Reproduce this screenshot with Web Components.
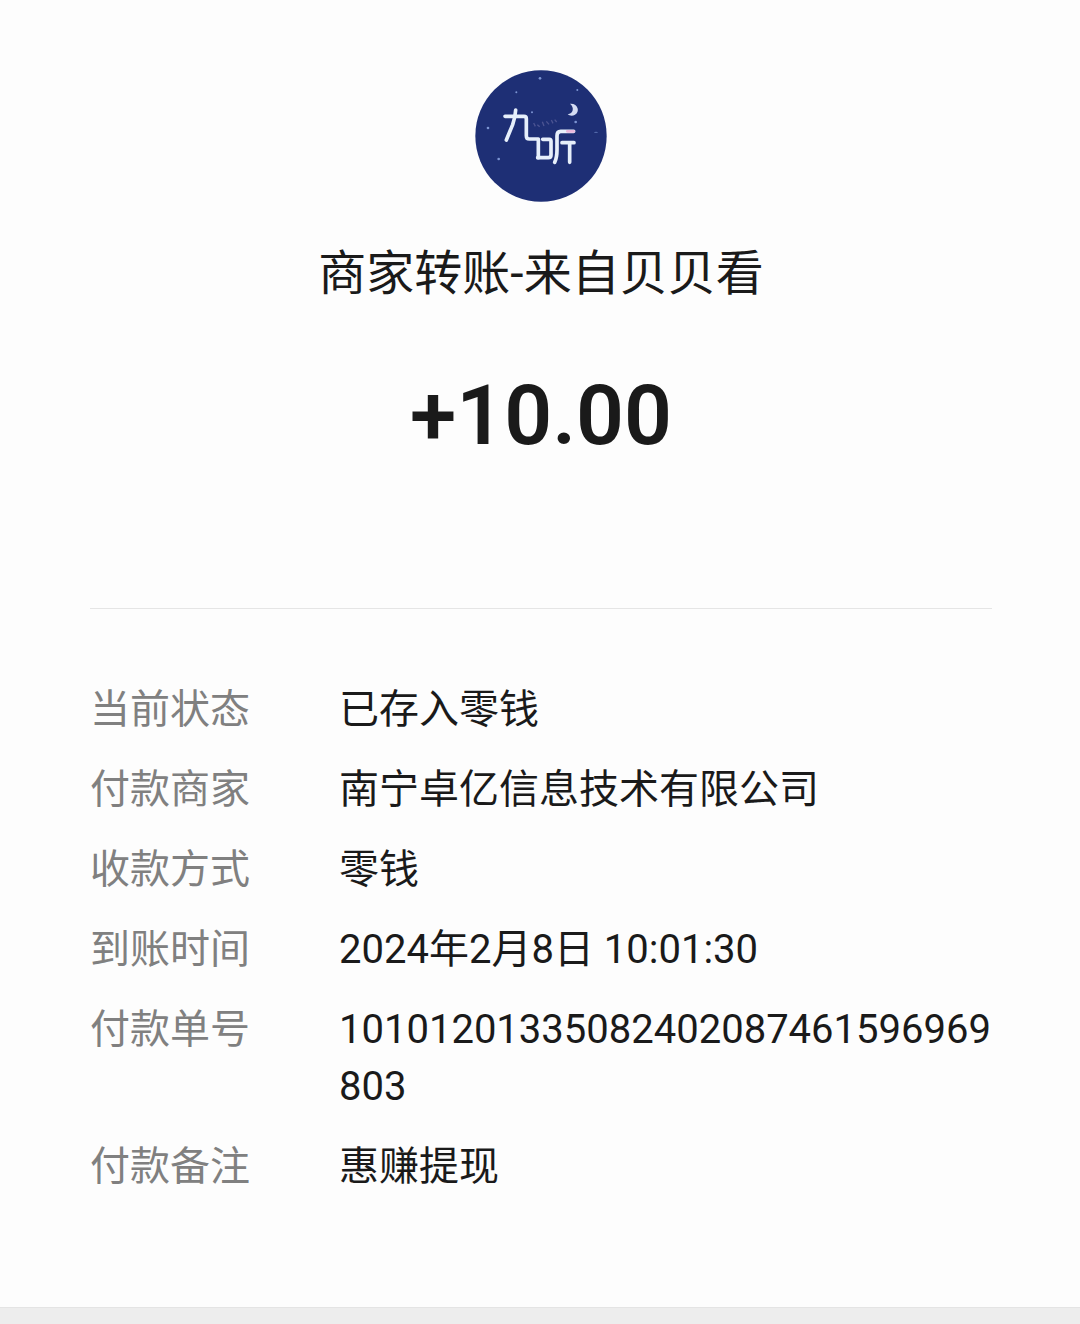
<!DOCTYPE html>
<html lang="zh-CN">
<head>
<meta charset="utf-8">
<meta name="viewport" content="width=device-width, initial-scale=1">
<title>账单详情</title>
<style>
body {
  margin: 0;
  background: #ededed;
  color: #1a1a1a;
  font-family: Roboto, "Noto Sans CJK SC", sans-serif;
}
</style>
</head>
<body>
<bill-card>
  <merchant-logo slot="logo"></merchant-logo>
  <span slot="title">商家转账-来自贝贝看</span>
  <span slot="amount">+10.00</span>
  <bill-row label="当前状态">已存入零钱</bill-row>
  <bill-row label="付款商家">南宁卓亿信息技术有限公司</bill-row>
  <bill-row label="收款方式">零钱</bill-row>
  <bill-row label="到账时间">2024年2月8日 10:01:30</bill-row>
  <bill-row label="付款单号">10101201335082402087461596969803</bill-row>
  <bill-row label="付款备注">惠赚提现</bill-row>
</bill-card>

<script>
const logo = document.createElement('template');
logo.innerHTML = `
<style>
:host {
  display: block;
  width: 132px;
  height: 132px;
}
svg {
  display: block;
  width: 100%;
  height: 100%;
}
.stroke {
  fill: none;
  stroke: #e6effb;
  stroke-width: 11;
  stroke-linecap: round;
  stroke-linejoin: round;
}
</style>
<svg viewBox="29 31 396 396" role="img" aria-label="九听">
  <circle cx="227" cy="229" r="197" fill="#1e2f75" />
  <g class="stroke">
    <path d="M119 170H176Q183 170 183 177V228Q183 238 192 238H219V294" />
    <path d="M151 151Q150 172 142 195L123 241" />
    <path d="M232 239H252Q257 239 257 245V286Q257 294 249 294H217" />
    <path d="M325 215H286Q275 215 275 228V270Q275 294 268 308" />
    <path d="M290 249H326M313 250V308" />
  </g>
  <path d="M306 215H325" stroke="#e9b7dc" stroke-width="8" stroke-linecap="round" />
  <path d="M314 132C338 130 345 156 329 165C322 170 312 168 307 164C324 161 328 144 314 132Z" fill="#d5dcf3" />
  <path d="M205 190l5 10M216 195l7 6M231 186l5 13M243 185l8 9M258 181l5 10M268 180l6 7" fill="none" stroke="#60649e" stroke-width="4" opacity=".7" />
  <g fill="#7c94d2">
    <circle cx="224" cy="56" r="4" />
    <circle cx="153" cy="98" r="3" />
    <circle cx="336" cy="91" r="3" />
    <circle cx="68" cy="205" r="4" />
    <circle cx="100" cy="298" r="4" />
    <circle cx="331" cy="187" r="4" />
    <circle cx="200" cy="158" r="3" />
    <ellipse cx="392" cy="218" rx="6" ry="2" opacity=".6" />
  </g>
</svg>
`;

const card = document.createElement('template');
card.innerHTML = `
<style>
:host {
  display: block;
  box-sizing: border-box;
  padding: 70px 88px 112px 90px;
  background: #fdfdfd;
  border-bottom: 1px solid #e4e4e4;
}
header {
  display: flex;
  flex-direction: column;
  align-items: center;
  padding-bottom: 142px;
  border-bottom: 1px solid #e5e5e5;
}
h1 {
  margin: 38px 0 0;
  font-size: 48px;
  font-weight: 400;
  line-height: 68px;
}
.amount {
  margin: 58px 0 0;
  font-size: 84px;
  font-weight: 600;
  line-height: 100px;
}
.rows {
  display: flex;
  flex-direction: column;
  gap: 23px;
  padding-top: 72px;
}
</style>
<header>
  <slot name="logo"></slot>
  <h1><slot name="title"></slot></h1>
  <p class="amount"><slot name="amount"></slot></p>
</header>
<div class="rows"><slot></slot></div>
`;

const row = document.createElement('template');
row.innerHTML = `
<style>
:host {
  display: block;
  font-size: 40px;
  line-height: 57px;
}
dl {
  display: grid;
  grid-template-columns: 249px 1fr;
  margin: 0;
}
dt {
  color: #808080;
}
dd {
  margin: 0;
  min-width: 0;
  overflow-wrap: anywhere;
}
</style>
<dl>
  <dt></dt>
  <dd><slot></slot></dd>
</dl>
`;

class MerchantLogo extends HTMLElement {
  constructor() {
    super();
    this.attachShadow({ mode: 'open' });
    this.shadowRoot.appendChild(logo.content.cloneNode(true));
  }
}

class BillCard extends HTMLElement {
  constructor() {
    super();
    this.attachShadow({ mode: 'open' });
    this.shadowRoot.appendChild(card.content.cloneNode(true));
  }
}

class BillRow extends HTMLElement {
  constructor() {
    super();
    this.attachShadow({ mode: 'open' });
    this.shadowRoot.appendChild(row.content.cloneNode(true));
  }
  connectedCallback() {
    this.shadowRoot.querySelector('dt').textContent = this.getAttribute('label');
  }
}

customElements.define('merchant-logo', MerchantLogo);
customElements.define('bill-card', BillCard);
customElements.define('bill-row', BillRow);
</script>
</body>
</html>
